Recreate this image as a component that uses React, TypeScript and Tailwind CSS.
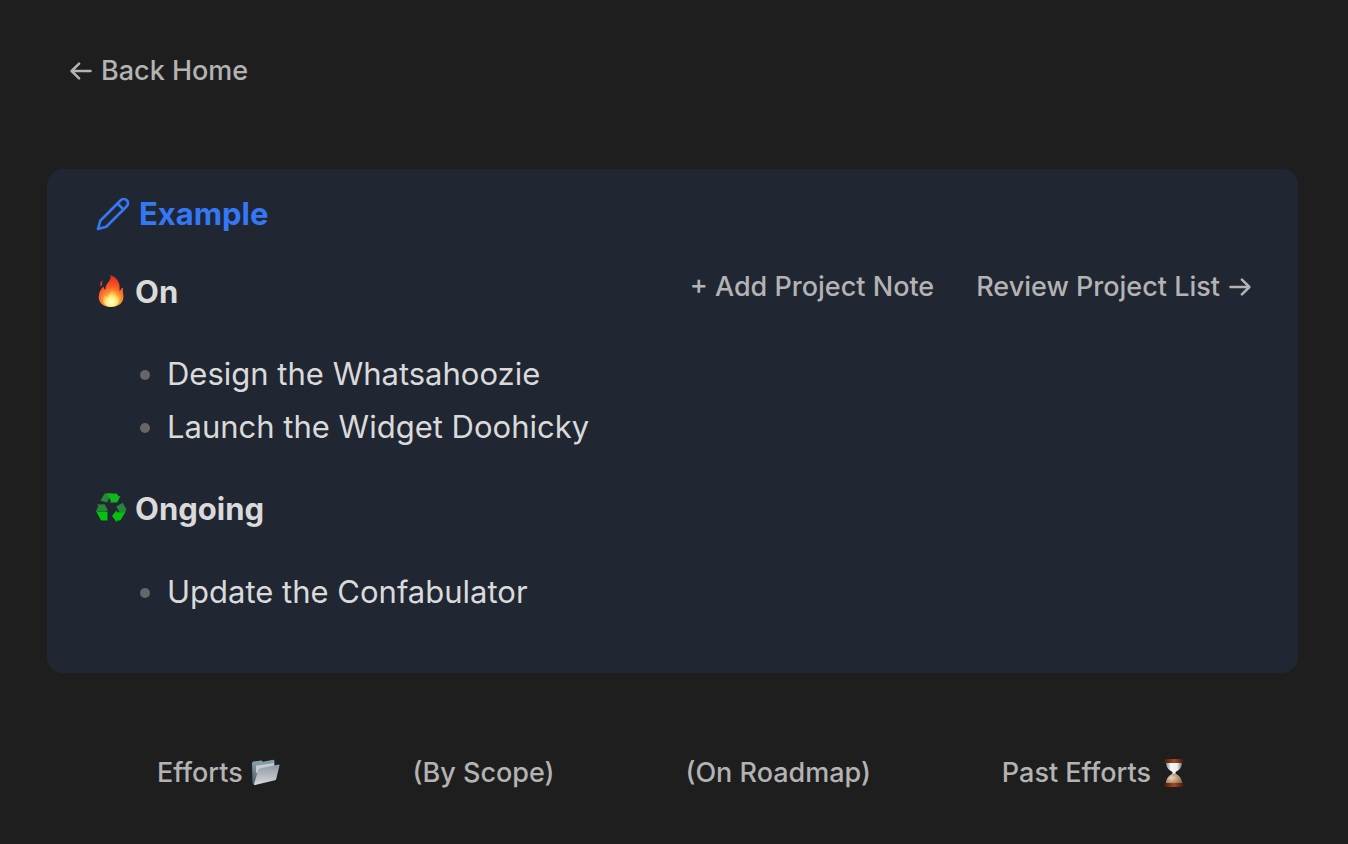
import type { ReactNode } from "react";

function Pencil() {
  return (
    <svg viewBox="0 0 24 24" className="size-9 shrink-0" fill="none" stroke="currentColor" strokeWidth="1.75" strokeLinecap="round" strokeLinejoin="round" aria-hidden="true">
      <path d="M17 3a2.85 2.83 0 1 1 4 4L7.5 20.5 2 22l1.5-5.5Z" />
      <path d="m15 5 4 4" />
    </svg>
  );
}

function Arrow({ flip = false }: { flip?: boolean }) {
  return (
    <svg viewBox="0 0 22 18" className={flip ? "h-[18px] w-[22px] shrink-0 rotate-180" : "h-[18px] w-[22px] shrink-0"} fill="none" stroke="currentColor" strokeWidth="2.5" strokeLinecap="round" strokeLinejoin="round" aria-hidden="true">
      <path d="M1.500 9H20M12.900 1.700 20.400 9l-7.500 7.300" />
    </svg>
  );
}

function Fire() {
  return (
    <svg viewBox="-1 1 32 36" className="h-9 w-8 shrink-0" aria-hidden="true">
      <defs>
        <radialGradient id="fireOuter" cx="16" cy="28" r="25" gradientUnits="userSpaceOnUse">
          <stop offset="0" stopColor="#ffe25a" />
          <stop offset=".3" stopColor="#ffa035" />
          <stop offset=".58" stopColor="#f95a28" />
          <stop offset="1" stopColor="#e22b1b" />
        </radialGradient>
        <radialGradient id="fireInner" cx="15.500" cy="29" r="12" gradientUnits="userSpaceOnUse">
          <stop offset="0" stopColor="#fffde0" />
          <stop offset=".45" stopColor="#ffee74" />
          <stop offset="1" stopColor="#ffb03c" stopOpacity=".2" />
        </radialGradient>
      </defs>
      <path fill="url(#fireOuter)" d="M14.4 2c.6 2.5-.1 4.7-2.3 7.600-2 2.500-2.900 4.600-2.700 7.400-1-.8-1.700-1.900-1.900-3.400-2.800 2.600-4.800 6-4.800 10.500C2.700 30.200 7.700 34 15 34c7.400 0 12.400-4 12.400-10.200 0-3.200-.9-5.800-.3-9.300-1.700.7-2.700 1.900-3.100 3.900-.5-.9-.5-2-.4-3.400.4-6.300-3.800-10.900-9.200-13Z" />
      <path fill="#ed4423" d="M7 7.500c-2 .7-3.200 2.200-2.400 4 .3.800-.3 1.400-1 1.800 1.700.2 2.700-.8 2.400-2.200C5.800 9.800 6.200 8.700 7 7.500Z" />
      <path fill="url(#fireInner)" d="M15.500 15c.5 3-1.500 4.400-3 6.500-.6.900-.8 1.800-.7 3-1.200-.6-1.800-1.600-2-3-1.800 1.800-2.800 3.700-2.600 6.200.3 3.700 3.400 6.100 7.800 6.100 4.700 0 8.200-2.800 8.200-7 0-1.700-.5-3-.3-4.900-1 .5-1.700 1.300-2.100 2.500C20.600 20.600 18.500 17 15.500 15Z" />
    </svg>
  );
}

function Recycle() {
  return (
    <svg viewBox="0 1 32 32" className="size-8 shrink-0" aria-hidden="true">
      <path fill="#268739" d="M5.500 8.500 9 2.600C9.500 1.800 10 1.500 11 1.500h5.500L12 10.500Z" />
      <path fill="#12b51b" d="M10.500 1.500h10c1 0 1.700.5 2.200 1.400l1 1.700 2-1-3.600 7h-8l2-1.200-2.800-5.400c-.8-1.500-1.500-2.300-2.800-2.500Z" />
      <path fill="#268739" d="m1.500 12.500 8-.3 4 7-2-1-.8 1.300H1l2.500-6Z" />
      <path fill="#04c20e" d="M.8 18.500c.8 1 1.500 1.300 3 1.300h8.700v8.700H7.800c-1.200 0-2-.4-2.600-1.500Z" />
      <path fill="#268739" d="m21.300 14.500 6.300-3.700 3.200 5.500c.6 1 .5 1.800 0 2.700-.5 1-1.500 1.300-2.700 1.300h-3.500Z" />
      <path fill="#04c20e" d="M24.500 20.200h3.600c1.400 0 2.400-.4 3-1.400l-4.800 8.100c-.6 1.100-1.400 1.600-2.500 1.600h-2v2l-4.800-6.500 4.800-6v2.300Z" />
    </svg>
  );
}

function Folder() {
  return (
    <svg viewBox="1 0 30 28" className="h-7 w-[30px] shrink-0" aria-hidden="true">
      <defs>
        <linearGradient id="folderBack" x1="0" y1="0" x2="0" y2="1">
          <stop offset="0" stopColor="#8da4ae" />
          <stop offset="1" stopColor="#495c67" />
        </linearGradient>
        <linearGradient id="folderFront" x1="0" y1="0" x2="0" y2="1">
          <stop offset="0" stopColor="#8f989f" />
          <stop offset="1" stopColor="#d5d8df" />
        </linearGradient>
      </defs>
      <path fill="url(#folderBack)" d="M1 4 2 2.500 10.500 1.500l1.500 1.300L22.500.8l1 1.200V19L3.500 26 1.500 24.500Z" />
      <path fill="#c3cbd0" d="m5 6.500 18-2.500V10L5 14Z" />
      <path fill="url(#folderFront)" d="M9 9.500 27.500 5.500c.8-.2 1.200.3 1 1L25.200 20c-.2.700-.5 1-1.200 1.200L4 26c-.8.200-1.100-.1-.9-1L7.300 11c.2-.8.9-1.300 1.700-1.500Z" />
    </svg>
  );
}

function Hourglass() {
  return (
    <svg viewBox="-3 0 28 30" className="h-[30px] w-7 shrink-0" aria-hidden="true">
      <defs>
        <linearGradient id="wood" x1="0" x2="1">
          <stop offset="0" stopColor="#45190b" />
          <stop offset=".5" stopColor="#a04a25" />
          <stop offset="1" stopColor="#3d160a" />
        </linearGradient>
        <linearGradient id="glass" x1="0" x2="1">
          <stop offset="0" stopColor="#7c8589" />
          <stop offset=".3" stopColor="#f8f8f8" />
          <stop offset=".7" stopColor="#eeeeee" />
          <stop offset="1" stopColor="#6d7477" />
        </linearGradient>
        <radialGradient id="sand" cx=".35" cy=".45" r=".7">
          <stop offset="0" stopColor="#edd7b7" />
          <stop offset="1" stopColor="#956b48" />
        </radialGradient>
      </defs>
      <path fill="url(#glass)" d="M3 4h16c0 5-2 7.500-5.800 9.500-1 .6-1 2.200 0 2.800C17 18.500 19 21 19 25.500H3c0-4.500 2-7 5.800-9.200 1-.6 1-2.200 0-2.800C5 11.500 3 9 3 4Z" />
      <path fill="url(#sand)" d="M11 15.500c4.500 1.500 7.500 5 7.500 10h-15c0-5 3-8.500 7.500-10Z" />
      <rect x="1" y="1" width="20" height="4" rx="1.500" fill="url(#wood)" />
      <rect x="1" y="25" width="20" height="4" rx="1.500" fill="url(#wood)" />
    </svg>
  );
}

function SectionTitle({ icon, children }: { icon: ReactNode; children: ReactNode }) {
  return (
    <h2 className="flex items-center gap-2 text-[31px] leading-[50px] font-bold">
      {icon}
      {children}
    </h2>
  );
}

function Items({ items }: { items: string[] }) {
  return (
    <ul className="pl-[45px]">
      {items.map((item) => (
        <li key={item} className="flex items-center gap-[17px] py-[2px] text-[31px] leading-[49px]">
          <span className="mt-[2px] size-2.5 shrink-0 rounded-full bg-[#666666]" />
          {item}
        </li>
      ))}
    </ul>
  );
}

const link = "flex items-center gap-[9px] whitespace-nowrap text-[27px] leading-[40px] font-[450] text-[#b3b3b3]";

export default function App() {
  return (
    <div className="min-h-screen bg-[#1e1e1e] pr-[50px] pl-[47px] font-['Inter',sans-serif] text-[#dadada]">
      <nav className="flex pt-[51px] pl-[23px]">
        <a href="#home" className={link}>
          <Arrow flip />
          Back Home
        </a>
      </nav>

      <main className="mt-[78px] rounded-2xl bg-[#202733] pt-[21px] pr-[47px] pb-[55px] pl-12">
        <h1 className="flex items-center gap-2 text-[31px] leading-[48px] font-bold text-[#3478f6]">
          <Pencil />
          Example
        </h1>
        <div className="mt-[29px] flex items-start justify-between">
          <SectionTitle icon={<Fire />}>On</SectionTitle>
          <div className="flex gap-[42px]">
            <a href="#add" className={link}>+ Add Project Note</a>
            <a href="#review" className={link}>
              Review Project List
              <Arrow />
            </a>
          </div>
        </div>
        <div className="mt-[30px]">
          <Items items={["Design the Whatsahoozie", "Launch the Widget Doohicky"]} />
        </div>
        <div className="mt-[31px]">
          <SectionTitle icon={<Recycle />}>Ongoing</SectionTitle>
        </div>
        <div className="mt-[31px]">
          <Items items={["Update the Confabulator"]} />
        </div>
      </main>

      <footer className="mt-20 flex justify-between px-[110px]">
        <a href="#efforts" className={link}>Efforts <Folder /></a>
        <a href="#scope" className={link}>(By Scope)</a>
        <a href="#roadmap" className={link}>(On Roadmap)</a>
        <a href="#past" className={link}>Past Efforts <Hourglass /></a>
      </footer>
    </div>
  );
}
